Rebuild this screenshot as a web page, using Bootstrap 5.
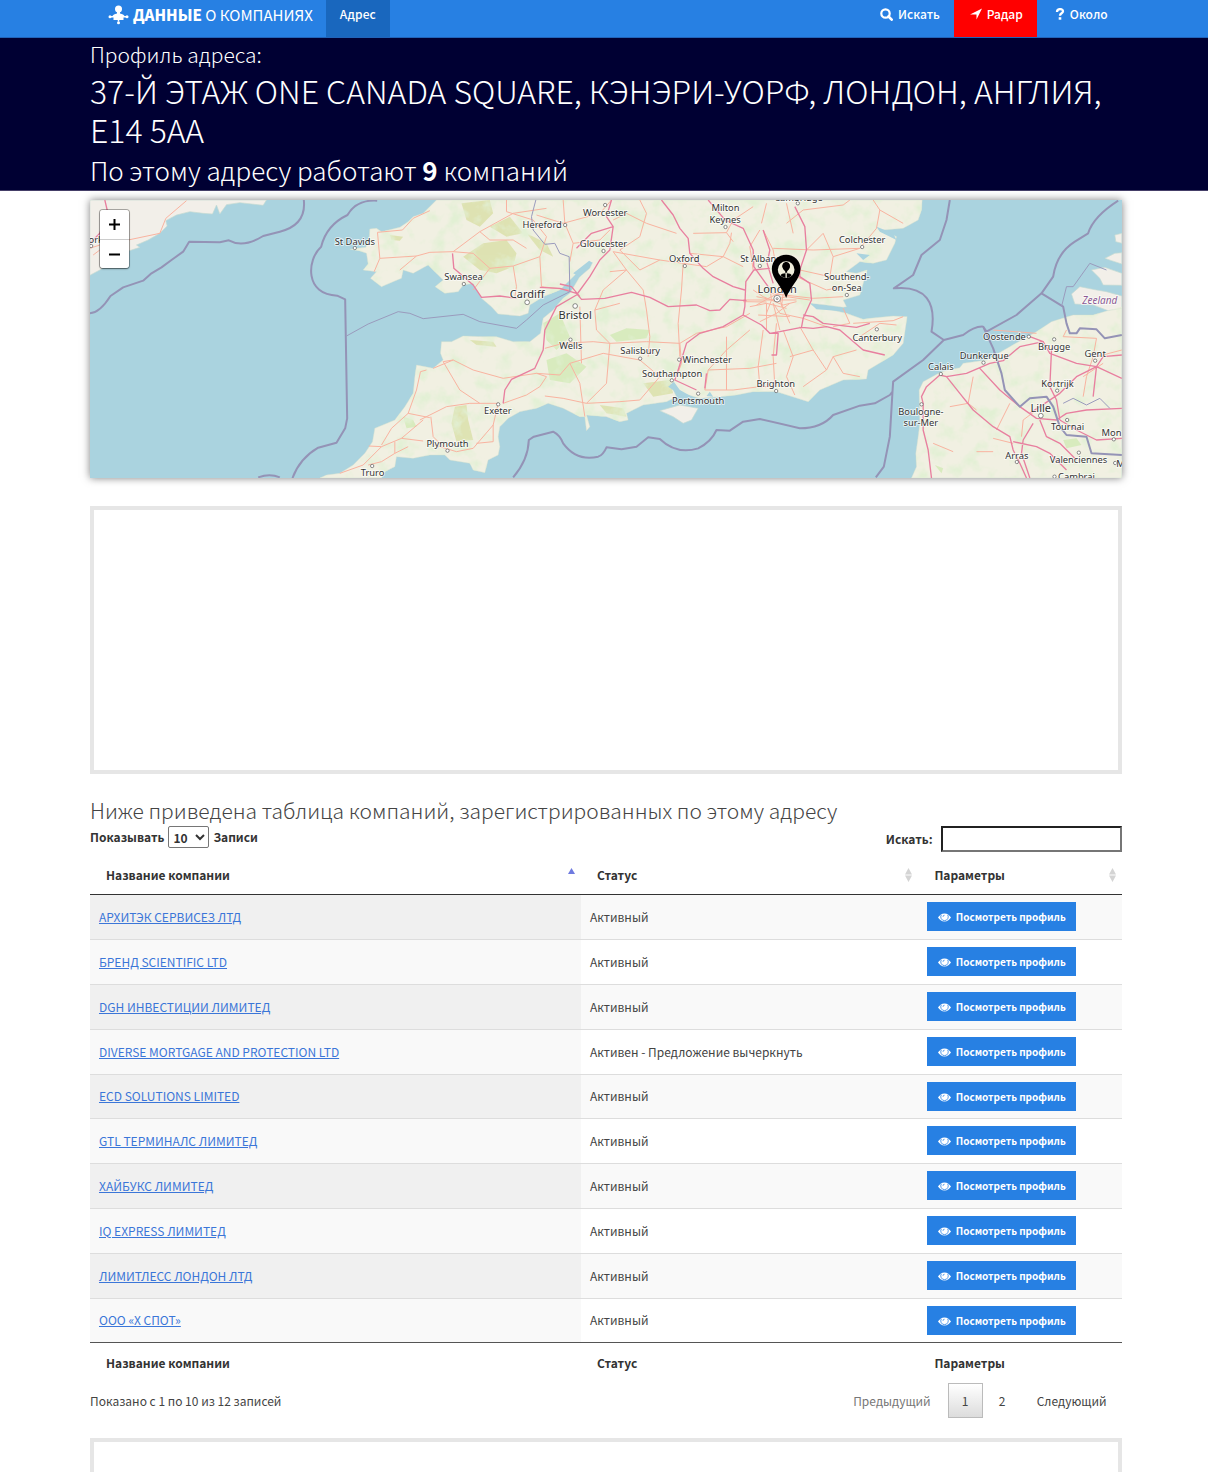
<!DOCTYPE html>
<html lang="ru">
<head>
<meta charset="utf-8">
<meta name="viewport" content="width=device-width, initial-scale=1">
<title>Данные о компаниях — профиль адреса</title>
<link href="https://cdn.jsdelivr.net/npm/bootstrap@5.3.0/dist/css/bootstrap.min.css" rel="stylesheet">
<style>
  body { font-family: "Noto Sans CJK SC", "Noto Sans", sans-serif; font-size: 12px; line-height: 20px; color: #444; background: #fff; }
  .page-x { padding-left: 7.45%; padding-right: 7.15%; }
  .topbar { background: #2780e3; border-bottom: 1px solid #2163b8; min-height: 38px; }
  .topbar.navbar { padding-top: 0; padding-bottom: 0; }
  .topbar .brandlink { color: #fff; font-size: 15px; font-weight: 400; line-height: 30px; padding: 0 13px 0 18px; gap: 4px; }
  .topbar .brandlink b { font-weight: 900; }
  .topbar .navbar-nav .nav-link { color: #fff; font-size: 12px; font-weight: 500; line-height: 20px; padding: 4px 14px 13px; gap: 5px; display: flex; align-items: center; }
  .topbar .navbar-nav .nav-link.active { background: #1967be; color: #fff; }
  .topbar .navbar-nav .radar { background: #f00; padding-left: 16px; }
  .topbar .navbar-nav .about { padding-left: 18px; }
  .hero { background: #000033; color: #fff; border-bottom: 1px solid #453f68; font-weight: 300; }
  .hero h3, .hero h1, .hero h2, .lead-in { font-weight: 300; margin: 0; }
  .hero h3 { font-size: 21px; line-height: 33px; }
  .hero h1 { font-size: 32px; line-height: 39px; }
  .hero h2 { font-size: 26px; line-height: 41px; }
  .hero b { font-weight: 700; }
  .mapbox { height: 278px; margin-top: 9px; background: #aad3df; box-shadow: 0 0 8px rgba(0,0,0,.5); position: relative; overflow: hidden; }
  .mapbox > svg { display: block; width: 100%; height: 100%; }
  .zoomctl { position: absolute; left: 10px; top: 10px; width: 29px; border-radius: 3px; box-shadow: 0 0 0 1px rgba(0,0,0,.3), 0 1px 2px rgba(0,0,0,.4); overflow: hidden; }
  .zoomctl button { border: 0; background: #fff; height: 29px; padding: 0; display: grid; place-items: center; }
  .zoomctl button + button { border-top: 1px solid #ccc; }
  .zoomctl svg { width: 11px; height: 11px; }
  .adframe { border: 4px solid #e6e6e6; }
  .ad-main { height: 268px; margin-top: 28px; }
  .lead-in { font-size: 21px; line-height: 32px; color: #444; }
  .main-table { margin-top: 20px; }
  .controls { min-height: 26px; font-weight: 700; color: #333; }
  .controls select { width: 41px; height: 22px; font-size: 12px; font-weight: 700; line-height: 18px; color: #333; background: #fff; border: 1px solid #767676; border-radius: 2px; padding: 0; }
  .controls input { width: 181px; height: 26px; border: 2px inset #767676; background: #fff; border-radius: 0; }
  .cotable { table-layout: fixed; margin: 0; color: #444; --bs-table-bg: transparent; }
  .cotable > :not(caption) > * > * { padding: 0 9px; height: 45px; border-bottom: 0; vertical-align: middle; box-shadow: none; }
  .cotable > tbody > tr + tr > td { border-top: 1px solid #ddd; }
  .cotable > tbody > tr:nth-child(5n) > td { height: 44px; }
  .cotable > tbody > tr:nth-child(odd) > td { background: #f9f9f9; }
  .cotable > tbody > tr > td:first-child { background: #f9f9f9; }
  .cotable > tbody > tr:nth-child(odd) > td:first-child { background: #f0f0f0; }
  .cotable > thead > tr > th, .cotable > tfoot > tr > th { padding: 0 5px 0 16px; color: #333; font-weight: 700; }
  .cotable > thead > tr > th { height: 38px; border-bottom: 1px solid #333; }
  .cotable > tfoot > tr > th { height: 41px; border-top: 1px solid #555; }
  .cotable td a { color: #3b76d8; }
  .c-name { width: 47.6%; } .c-status { width: 32.7%; }
  .sorter { width: 9px; height: 14px; flex: none; }
  .viewbtn { background: #2780e3; color: #fff; border: 0; border-radius: 0; font-size: 10px; font-weight: 700; line-height: 20px; padding: 5px 10px 4px 11px; white-space: nowrap; }
  .viewbtn:hover { background: #1967be; color: #fff; }
  .viewbtn svg { width: 13px; height: 11px; margin-right: 2px; vertical-align: -2px; }
  .pager { gap: 2px; }
  .pager button { border: 1px solid transparent; background: none; color: #444; min-width: 35px; height: 35px; line-height: 33px; padding: 0 14px; }
  .pager button:disabled { color: #777; }
  .pager .current { border-color: #bbb; background: linear-gradient(#fff, #dcdcdc); }
  .pager .pg { padding: 0; }
  .ad-foot { margin-top: 20px; border-bottom: 0; min-height: 30px; }
  .lbl { font-family: "Noto Sans", sans-serif; font-size: 28px; fill: #333; stroke: #fff; stroke-opacity: .75; stroke-width: 5px; paint-order: stroke; text-anchor: middle; }
  .lbl .city { font-size: 33px; }
  .lbl .region { fill: #8b5a94; font-style: italic; font-size: 30px; }
  .dots circle { fill: #fff; stroke: #555; stroke-width: 2px; }
  .land { fill: #f2efe9; stroke: #c5dbd2; stroke-width: 2px; }
  .trunk { fill: none; stroke: #f9b3a0; stroke-width: 3px; stroke-linejoin: round; }
  .mway { fill: none; stroke: #e87f9f; stroke-width: 4px; stroke-linejoin: round; }
  .border-sea { fill: none; stroke: #9493b6; stroke-width: 6px; stroke-linejoin: round; }
  .border-thin { fill: none; stroke: #9a9bbd; stroke-width: 3px; }
</style>
<script src="https://cdn.jsdelivr.net/npm/bootstrap@5.3.0/dist/js/bootstrap.bundle.min.js"></script>
</head>
<body class="d-flex flex-column min-vh-100">
<svg class="d-none" xmlns="http://www.w3.org/2000/svg">
  <symbol id="eye" viewBox="0 0 26 20"><path fill="#fff" d="M13 2C7 2 3 6 0 10c3 4 7 8 13 8s10-4 13-8c-3-4-7-8-13-8z"/><path fill="none" stroke="#2780e3" stroke-width="1.600" d="M6.500 5a7.500 7.500 0 1 0 13 0M10 8.500a3 3 0 0 1 3-3"/></symbol>
  <symbol id="sort" viewBox="0 0 9 14"><path fill="#d4d4d4" d="M4.500 0 8 6.500H1zM4.500 14 8 7.500H1z"/></symbol>
  <symbol id="sortup" viewBox="0 0 9 14"><path fill="#6f7be0" d="M4.500 0 8 6H1z"/></symbol>
</svg>

<nav class="navbar navbar-expand topbar page-x align-items-stretch" aria-label="Главная навигация">
  <a class="brandlink d-flex align-items-center align-self-start text-decoration-none" href="#">
    <svg width="21" height="20" viewBox="0 0 42 40" fill="#fff" aria-hidden="true"><circle cx="21" cy="8" r="7"/><path d="M18 13h6v4c5 1 8 3 9 5h3v3H31v5H11v-5H6v-3h3c1-2 4-4 9-5z"/><circle cx="4" cy="23.500" r="3"/><circle cx="38" cy="23.500" r="3"/><path d="M19.500 29h3v4h-3z"/><circle cx="21" cy="35.500" r="3"/></svg>
    <span><b>ДАННЫЕ</b> О КОМПАНИЯХ</span>
  </a>
  <ul class="navbar-nav me-auto">
    <li class="nav-item"><a class="nav-link active" href="#" aria-current="page">Адрес</a></li>
  </ul>
  <ul class="navbar-nav">
    <li class="nav-item"><a class="nav-link" href="#"><svg width="13" height="13" viewBox="0 0 13 13" fill="none" stroke="#fff" aria-hidden="true"><circle cx="5.500" cy="5.500" r="4.200" stroke-width="2.200"/><path d="m8.500 8.500 3.200 3.200" stroke-width="2.600" stroke-linecap="round"/></svg>Искать</a></li>
    <li class="nav-item"><a class="nav-link radar" href="#"><svg width="12" height="12" viewBox="0 0 12 12" fill="#fff" aria-hidden="true"><path d="M12 .5 6.500 11.500V6.500H0z"/></svg>Радар</a></li>
    <li class="nav-item"><a class="nav-link about" href="#"><svg width="10" height="12" viewBox="0 0 10 12" fill="none" stroke="#fff" aria-hidden="true"><path d="M2 4c0-4 6-3.500 6-.8C8 5.500 5 5 5 7.800" stroke-width="2.300"/><path d="M3.700 9.200h2.600v2.500H3.700z" fill="#fff" stroke="none"/></svg>Около</a></li>
  </ul>
</nav>

<header class="hero page-x">
  <h3>Профиль адреса:</h3>
  <h1>37-Й ЭТАЖ ONE CANADA SQUARE, КЭНЭРИ-УОРФ, ЛОНДОН, АНГЛИЯ, E14 5AA</h1>
  <h2>По этому адресу работают <b>9</b> компаний</h2>
</header>

<main class="page-x d-flex flex-column flex-grow-1">
  <div class="mapbox">
    <svg viewBox="30 30 3096 834" preserveAspectRatio="xMidYMid slice" role="img" aria-label="Карта южной Англии">
      <defs>
        <clipPath id="landclip"><use href="#gb"/><use href="#fr"/></clipPath>
        <filter id="mottle" x="0" y="0" width="100%" height="100%"><feTurbulence type="fractalNoise" baseFrequency=".02" numOctaves="4" seed="8"/><feColorMatrix values="0 0 0 0 .76  0 0 0 0 .87  0 0 0 0 .66  3 0 0 0 -1.450"/></filter>
      </defs>
      <g class="land">
        <path d="M30 30H560L550 46 480 38 440 44 420 72 410 45 398 72 370 70 330 65 290 75 258 92 262 108 240 130 205 150 170 165 180 172 140 185 60 240 30 256z"/>
        <path id="gb" d="M1070 30 1030 70 1000 80 985 95 960 112 905 125 890 115 870 117 868 150 858 172 810 178 838 182 860 190 865 222 850 240 890 245 872 265 905 290 940 275 965 265 970 240 1000 250 1045 225 1060 240 1090 270 1066 290 1095 310 1135 305 1150 285 1180 280 1205 325 1235 350 1255 372 1320 378 1345 370 1350 345 1390 320 1440 300 1470 270 1500 240 1538 218 1530 235 1500 260 1470 310 1450 325 1420 360 1390 385 1382 430 1350 455 1300 455 1250 440 1210 440 1150 438 1115 455 1085 455 1082 490 1090 510 1060 535 1010 525 1005 560 1000 610 975 650 945 690 885 715 878 755 855 790 820 825 780 850 740 855 720 864H905L915 845 945 830 950 800 1000 805 1050 795 1095 795 1110 810 1170 820 1180 840 1215 848 1225 810 1255 795 1260 770 1255 740 1260 710 1285 685 1320 665 1370 655 1405 640 1450 655 1500 680 1515 680 1520 722 1530 710 1520 675 1580 680 1620 695 1645 690 1640 670 1690 645 1760 635 1790 620 1770 580 1815 612 1860 625 1920 620 1970 615 2020 605 2090 605 2185 635 2220 600 2290 570 2360 567 2365 540 2440 495 2470 460 2482 380 2440 378 2370 385 2350 388 2300 370 2220 352 2190 340 2240 345 2290 352 2300 350 2290 330 2340 315 2362 240 2330 250 2300 245 2340 215 2380 220 2420 210 2445 160 2450 140 2410 120 2470 115 2515 90 2525 60 2527 30z"/>
        <path d="M1740 662 1800 645 1855 655 1835 690 1810 700 1780 680z"/>
        <path id="fr" d="M2495 864 2510 830 2508 790 2515 740 2520 700 2518 600 2530 575 2585 545 2640 533 2650 520 2720 510 2790 470 2870 425 2915 395 2980 375 3040 375 3090 360 3126 350V864z"/>
        <path d="M2975 312 3000 290 3050 300 3080 305 3126 318V355L3085 362 3040 345 2985 342zM3035 240 3075 232 3126 250V286L3070 285 3060 265zM3075 205 3105 190 3126 188V222L3095 212zM3105 135 3126 130V160L3108 155z"/>
      </g>
      <g clip-path="url(#landclip)">
        <rect x="700" y="30" width="2430" height="834" fill="#f0f2dc" opacity=".5"/>
        <g fill="#dbe0aa" opacity=".85"><path d="M1145 40 1230 30 1240 70 1200 110 1160 90zM1150 200 1210 160 1280 150 1310 190 1300 230 1250 250 1200 240zM1340 130 1400 160 1420 200 1380 180zM1230 110 1290 80 1330 130 1280 140zM1125 650 1160 645 1165 690 1180 750 1130 755 1115 700zM1170 450 1240 455 1250 470 1190 465zM1690 580 1770 570 1780 610 1720 620zM1560 645 1630 655 1640 680 1580 670z"/><path d="M930 135 970 140 960 152 935 150z"/></g>
        <path fill="#cfeab2" opacity=".75" d="M1590 435 1640 415 1710 420 1700 445 1610 455zM1390 400 1440 370 1470 440 1430 480 1400 450zM1400 510 1460 490 1520 530 1470 580 1410 570zM970 680 1000 690 1010 710 980 715zM2950 750 2990 745 3005 765 2960 775zM2565 825 2590 835 2585 850z"/>
        <rect x="700" y="30" width="2430" height="834" filter="url(#mottle)"/>
      </g>
      <g fill="#aad3df"><path d="M1500 260 1538 218 1528 212 1480 250zM1765 590 1810 620 1850 628 1800 600 1782 575zM2190 340 2240 350 2300 355 2270 362 2210 358zM2330 190 2370 195 2350 210zM1880 618 1890 605 1900 620zM2390 110 2440 130 2450 150 2400 125z"/></g>

      <g class="trunk">
        <path d="M145 150 240 130 258 85 320 32M30 175 60 165 145 150M40 195 60 180"/>
        <path d="M1050 62 1000 85 968 120 893 127 900 205 883 245M900 205 1010 198 1050 187 1120 185M1010 198 960 240M1120 185 1200 125 1300 70 1400 55M1120 185 1180 190 1230 235 1300 228 1380 200 1400 140 1360 90 1280 65 1280 30M1200 125 1230 150 1300 150 1340 175M1300 228 1310 290 1305 320M1380 200 1385 290 1470 300M1230 235 1180 300"/>
        <path d="M1370 75 1450 100 1560 70 1595 30M1450 30 1455 100 1480 160 1470 215M1480 160 1560 150 1590 120M1600 185 1740 210 1810 220M1600 185 1640 240 1690 300 1700 360 1710 440 1705 500M1640 240 1570 300 1545 360 1550 420 1590 460 1580 580 1520 640M1740 210 1680 240 1620 180 1680 140 1700 70 1680 30M1590 245 1640 240M1810 220 1805 300 1795 400 1800 500M1840 130 1940 128 1960 155M1830 190 1930 200 1990 230M1790 130 1700 100 1640 70 1600 90M1955 128 1950 160 1930 200 1880 230 1810 220M2020 50 1960 90 1940 128M2040 120 2010 170 2020 240M2060 40 2045 100"/>
        <path d="M1060 535 1120 510 1090 515 1140 600 1200 640M1120 510 1180 540 1270 565 1370 550 1440 555M1020 690 1100 650 1170 640 1255 640M1380 590 1340 615 1270 640M1380 590 1400 560 1370 550M1395 618 1450 625 1520 640 1620 635 1680 630 1740 560M1440 555 1470 520 1570 490 1680 510 1740 560M1470 520 1500 580 1515 680M1500 350 1505 520M1395 475 1450 460 1540 455 1590 460 1700 455 1800 460M1545 360 1620 340M1180 775 1130 785 1080 770 1050 760M1180 775 1240 705 1255 640M1240 705 1240 755 1190 760M1053 680 1060 740 1090 770M867 768 905 770 965 745 1030 753M905 765 935 715 985 670 1010 600 1022 545 1040 540M985 670 1050 683M965 745 1030 690M780 850 850 825 905 770M945 755 945 790 905 815 865 825M945 790 985 770"/>
        <path d="M1800 460 1850 430 1940 410 2010 370M1800 460 1805 520 1790 560M1875 600 1885 540 1940 480 2010 420M1885 540 2010 535 2090 520M1940 440 1940 600M1875 600 1960 600 2040 590 2080 590M2050 420 2035 530 2040 590M2090 400 2080 500 2085 590M2110 420 2140 500 2120 560 2145 615M2160 410 2200 480 2240 540 2260 500 2290 550 2340 560M2240 540 2170 590M2260 500 2330 480M2200 480 2130 500"/>
        <path d="M2050 120 2080 180 2100 300M2080 175 2200 180 2340 175M2120 100 2170 60 2290 45 2310 30M2120 40 2140 130M2180 180 2230 130 2260 200 2250 260 2160 240M2260 200 2340 175 2390 115 2400 60 2380 30M2400 60 2470 100M2150 260 2240 300 2290 290M2070 310 2200 325 2290 320M2080 340 2100 370 2170 385 2240 410M2030 320 2080 330 2120 320 2190 330M2320 400 2440 392 2470 380M2340 440 2400 400 2450 405M2290 355 2310 400 2260 410M2060 340 2060 420M2080 340 2100 420M2100 330 2130 400M2010 350 2060 340 2120 355M2035 375 2130 380"/>
        <path d="M2020 300 2050 320 2110 345 2150 335M2030 345 2075 320 2120 300M2040 395 2090 370 2130 340M2070 290 2075 330 2060 370M2110 310 2105 350M1990 330 2150 330M1990 335 2060 336"/>
        <path d="M2680 560 2665 640 2610 650M2665 640 2690 660M2740 420 2870 430M2960 420 2950 440 3050 445 3040 500 3020 560 3010 620M3050 500 3126 480M2870 660 2830 690 2825 740M2750 720 2790 640M2560 760 2620 785M2690 785 2740 785M2740 745 2800 760M3010 560 3070 520"/>
      </g>
      <g class="mway">
        <path d="M75 30 82 60 60 130 30 160"/>
        <path d="M1118 190 1122 235 1180 285 1205 322 1260 318 1310 325M1380 292 1440 295 1490 310 1505 328 1575 325 1655 307 1710 322 1765 350 1850 345 1890 362 1920 360 1950 328 2000 332M1440 282 1475 290 1500 320M1270 640 1275 600 1295 568 1365 535 1390 480 1395 420 1430 350 1490 315 1530 260 1560 210 1590 180 1600 110 1580 80 1595 30M1600 110 1535 130 1490 175M1745 30 1780 75 1800 115 1825 145 1830 190 1870 235 1900 260 1960 290 1995 300M1935 90 1990 115 2020 180 2022 230 2065 290M2022 240 1998 275 1995 350 1990 375 2045 405 2070 430M1990 375 1930 410 1860 430 1820 460 1795 540 1785 570 1850 600M1875 595 1880 550M1885 30 1940 95"/>
        <path d="M2145 50 2175 110 2180 180 2160 240 2160 260 2190 280 2195 330 2170 385 2165 412 2200 415 2240 410 2280 420 2350 480 2415 495M2165 412 2100 425 2070 430 2095 430 2090 495 2075 495M2050 120 2070 180 2062 220 2080 280M2170 375 2200 380 2230 400 2330 412 2370 400M2022 240 2070 235"/>
        <path d="M2530 640 2525 620 2540 590 2580 555 2600 560 2660 550 2730 520 2770 512 2820 470 2890 455 2850 440M2600 560 2640 610 2680 660 2740 710 2790 740 2800 780 2820 820 2840 864M2530 640 2530 720 2545 780 2555 864M2700 535 2760 600 2820 650 2870 685 2930 690 2960 670 3020 660 3126 655M2890 455 2910 490 2990 520 3050 530 3126 565M2915 480 2910 590 2930 630 2940 690M2860 700 2830 750 2825 790 2850 864M2880 690 2900 740 2940 760 2970 790 2990 810M2800 755 2870 770 2910 790 2960 840M3050 530 2990 560 2940 610 2850 670M2940 690 2990 720 3050 750 3126 745M3050 530 3070 500 3126 495M3050 530 3040 620"/>
      </g>
      <g class="border-sea">
        <path d="M30 370Q60 368 92 318L130 292 190 272 215 250 245 232 275 210 310 185 328 155 420 157 447 151Q490 175 550 138L600 125Q680 105 672 30"/>
        <path d="M892 32Q830 28 803 75 740 105 724 170C680 210 675 315 772 317L796 328 802 685 796 715 770 758 715 773Q660 805 638 864M535 862Q570 850 600 862"/>
        <path d="M1300 862Q1345 810 1347 750L1362 740 1420 725Q1440 735 1450 760 1490 815 1555 800 1570 795 1580 772L1625 778 1670 770 1705 742 1740 747Q1790 795 1855 775 1895 755 1910 720L1950 722 1990 695 2040 687Q2120 705 2160 715 2225 715 2260 675L2340 647 2385 640 2430 615 2438 605 2440 575 2530 510 2592 450 2650 435Q2685 408 2710 410L2720 425 2810 375 2885 310 2920 260Q2930 190 2985 155L3025 130Q3040 80 3115 32M2438 605 2430 740 2412 830 2388 862M2592 450 2555 425C2570 340 2540 285 2442 295L2500 255 2525 195 2580 150 2600 90 2610 30M2885 310 2950 350 2960 400 2970 430 2990 430 3000 415 3050 418 3075 445 3126 435M2710 410 2740 475 2765 550 2775 600 2820 650 2850 625 2900 620 2920 650 2940 710 2960 735 3020 740 3035 790 3126 795"/>
      </g>
      <path class="border-thin" d="M2950 640 2980 625 3020 645 3060 625 3090 655M800 438 865 402 955 365 990 370 1030 386 1150 373 1200 395 1310 415 1340 390 1390 345 1470 305 1468 200 1440 190 1425 160 1395 163 1360 120 1355 80 1368 30M2945 350 2960 290 2980 290 3030 220 3080 240"/>
      <g class="dots"><circle cx="34" cy="168" r="5"/><circle cx="825" cy="174" r="5"/><circle cx="877" cy="828" r="5"/><circle cx="1152" cy="282" r="5"/><circle cx="1342" cy="337" r="7"/><circle cx="1486" cy="348" r="7"/><circle cx="1472" cy="449" r="5"/><circle cx="1255" cy="643" r="5"/><circle cx="1103" cy="782" r="5"/><circle cx="1456" cy="105" r="5"/><circle cx="1576" cy="45" r="5"/><circle cx="1571" cy="183" r="5"/><circle cx="1815" cy="228" r="5"/><circle cx="1937" cy="111" r="5"/><circle cx="2040" cy="228" r="5"/><circle cx="1681" cy="506" r="5"/><circle cx="1798" cy="509" r="5"/><circle cx="1776" cy="571" r="5"/><circle cx="1855" cy="611" r="5"/><circle cx="2089" cy="603" r="5"/><circle cx="2347" cy="171" r="5"/><circle cx="2301" cy="315" r="5"/><circle cx="2391" cy="418" r="5"/><circle cx="2154" cy="40" r="5"/><circle cx="2583" cy="552" r="5"/><circle cx="2711" cy="518" r="5"/><circle cx="2847" cy="440" r="5"/><circle cx="2923" cy="448" r="5"/><circle cx="3046" cy="512" r="5"/><circle cx="2932" cy="602" r="5"/><circle cx="2883" cy="677" r="7"/><circle cx="2962" cy="690" r="5"/><circle cx="3102" cy="748" r="5"/><circle cx="2997" cy="788" r="5"/><circle cx="2811" cy="816" r="5"/><circle cx="2525" cy="643" r="5"/><circle cx="3106" cy="819" r="5"/><circle cx="2924" cy="860" r="5"/><circle cx="2092" cy="326" r="10"/><circle cx="2092" cy="326" r="3"/></g>
      <g class="lbl">
        <text x="48" y="158">ork</text><text x="825" y="164">St Davids</text><text x="878" y="857">Truro</text>
        <text x="1151" y="271">Swansea</text><text class="city" x="1342" y="323">Cardiff</text><text class="city" x="1486" y="388">Bristol</text>
        <text x="1387" y="114">Hereford</text><text x="1576" y="79">Worcester</text><text x="1571" y="170">Gloucester</text><text x="1473" y="477">Wells</text>
        <text x="1254" y="673">Exeter</text><text x="1103" y="771">Plymouth</text><text x="1937" y="64">Milton</text><text x="1936" y="99">Keynes</text>
        <text x="1813" y="217">Oxford</text><text x="2042" y="217">St Albans</text><text x="1681" y="492">Salisbury</text><text x="1882" y="519">Winchester</text>
        <text x="1777" y="561">Southampton</text><text x="1855" y="642">Portsmouth</text><text x="2088" y="592">Brighton</text>
        <text class="city" x="2092" y="308">London</text><text x="2347" y="160">Colchester</text><text x="2301" y="271">Southend-</text><text x="2301" y="304">on-Sea</text>
        <text x="2392" y="452">Canterbury</text><text x="2774" y="451">Oostende</text><text x="2923" y="480">Brugge</text><text x="3046" y="500">Gent</text>
        <text x="2713" y="507">Dunkerque</text><text x="2583" y="541">Calais</text><text x="2933" y="590">Kortrijk</text><text class="city" x="2883" y="665">Lille</text>
        <text x="2523" y="676">Boulogne-</text><text x="2523" y="708">sur-Mer</text><text x="2963" y="721">Tournai</text><text x="3095" y="738">Mon</text>
        <text x="2811" y="806">Arras</text><text x="2996" y="820">Valenciennes</text><text x="2990" y="871">Cambrai</text><text x="3122" y="830">M</text>
        <text x="2156" y="32">Cambridge</text><text class="region" x="3060" y="343">Zeeland</text>
      </g>
      <path d="M2119 324C2108 290 2076 268 2076 237a43 43 0 0 1 86 0C2162 268 2130 290 2119 324z"/>
      <circle cx="2119" cy="239" r="25" fill="#f0efdc"/><circle cx="2119" cy="229" r="11"/><path d="M2119 216c8 0 12 7 11 14-1 6-5 12-8 13v5h-6v-5c-3-1-7-7-8-13-1-7 3-14 11-14z"/><path d="M2117 250c-8 0-13 2-15 6a25 25 0 0 0 15 8zM2121 250c8 0 13 2 15 6a25 25 0 0 1-15 8z"/>
    </svg>
    <div class="zoomctl d-flex flex-column">
      <button type="button" aria-label="Приблизить"><svg viewBox="0 0 11 11" stroke="#000" stroke-width="2"><path d="M5.500 0v11M0 5.500h11"/></svg></button>
      <button type="button" aria-label="Отдалить"><svg viewBox="0 0 11 11" stroke="#000" stroke-width="2"><path d="M0 5.500h11"/></svg></button>
    </div>
  </div>

  <div class="adframe ad-main"></div>

  <section class="main-table">
  <h3 class="lead-in">Ниже приведена таблица компаний, зарегистрированных по этому адресу</h3>
  <div class="controls d-flex justify-content-between align-items-start">
    <div class="d-flex align-items-center gap-1">
      <label for="len">Показывать</label>
      <select id="len"><option>10</option><option>25</option><option>50</option><option>100</option></select>
      <label for="len">Записи</label>
    </div>
    <div class="d-flex align-items-center gap-2"><label for="q">Искать:</label><input id="q" type="search"></div>
  </div>

  <table class="table cotable mt-1">
    <colgroup><col class="c-name"><col class="c-status"><col></colgroup>
    <thead><tr>
      <th scope="col"><span class="d-flex justify-content-between align-items-center">Название компании<svg class="sorter"><use href="#sortup"/></svg></span></th>
      <th scope="col"><span class="d-flex justify-content-between align-items-center">Статус<svg class="sorter"><use href="#sort"/></svg></span></th>
      <th scope="col"><span class="d-flex justify-content-between align-items-center">Параметры<svg class="sorter"><use href="#sort"/></svg></span></th>
    </tr></thead>
    <tbody>
      <tr><td><a href="#">АРХИТЭК СЕРВИСЕЗ ЛТД</a></td><td>Активный</td><td><button type="button" class="btn viewbtn"><svg><use href="#eye"/></svg> Посмотреть профиль</button></td></tr>
      <tr><td><a href="#">БРЕНД SCIENTIFIC LTD</a></td><td>Активный</td><td><button type="button" class="btn viewbtn"><svg><use href="#eye"/></svg> Посмотреть профиль</button></td></tr>
      <tr><td><a href="#">DGH ИНВЕСТИЦИИ ЛИМИТЕД</a></td><td>Активный</td><td><button type="button" class="btn viewbtn"><svg><use href="#eye"/></svg> Посмотреть профиль</button></td></tr>
      <tr><td><a href="#">DIVERSE MORTGAGE AND PROTECTION LTD</a></td><td>Активен - Предложение вычеркнуть</td><td><button type="button" class="btn viewbtn"><svg><use href="#eye"/></svg> Посмотреть профиль</button></td></tr>
      <tr><td><a href="#">ECD SOLUTIONS LIMITED</a></td><td>Активный</td><td><button type="button" class="btn viewbtn"><svg><use href="#eye"/></svg> Посмотреть профиль</button></td></tr>
      <tr><td><a href="#">GTL ТЕРМИНАЛС ЛИМИТЕД</a></td><td>Активный</td><td><button type="button" class="btn viewbtn"><svg><use href="#eye"/></svg> Посмотреть профиль</button></td></tr>
      <tr><td><a href="#">ХАЙБУКС ЛИМИТЕД</a></td><td>Активный</td><td><button type="button" class="btn viewbtn"><svg><use href="#eye"/></svg> Посмотреть профиль</button></td></tr>
      <tr><td><a href="#">IQ EXPRESS ЛИМИТЕД</a></td><td>Активный</td><td><button type="button" class="btn viewbtn"><svg><use href="#eye"/></svg> Посмотреть профиль</button></td></tr>
      <tr><td><a href="#">ЛИМИТЛЕСС ЛОНДОН ЛТД</a></td><td>Активный</td><td><button type="button" class="btn viewbtn"><svg><use href="#eye"/></svg> Посмотреть профиль</button></td></tr>
      <tr><td><a href="#">ООО «Х СПОТ»</a></td><td>Активный</td><td><button type="button" class="btn viewbtn"><svg><use href="#eye"/></svg> Посмотреть профиль</button></td></tr>
    </tbody>
    <tfoot><tr><th scope="col">Название компании</th><th scope="col">Статус</th><th scope="col">Параметры</th></tr></tfoot>
  </table>

  <div class="d-flex justify-content-between align-items-center">
    <div>Показано с 1 по 10 из 12 записей</div>
    <div class="pager d-flex">
      <button type="button" disabled>Предыдущий</button>
      <button type="button" class="pg current" aria-current="page">1</button>
      <button type="button" class="pg">2</button>
      <button type="button">Следующий</button>
    </div>
  </div>
  </section>

  <div class="adframe ad-foot flex-grow-1"></div>
</main>
</body>
</html>
